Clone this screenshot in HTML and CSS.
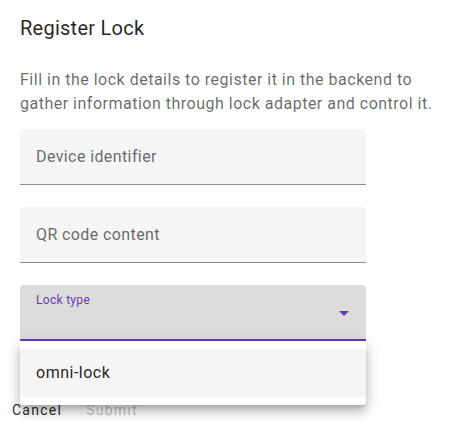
FILE: index.html
```html
<!DOCTYPE html>
<html lang="en">
<head>
<meta charset="utf-8">
<title>Register Lock</title>
<link rel="stylesheet" href="styles.css">
</head>
<body>
<div class="dialog">
  <h2 class="title">Register Lock</h2>
  <div class="content">
    <p class="desc">Fill in the lock details to register it in the backend to gather information through lock adapter and control it.</p>
    <div class="field"><span class="label">Device identifier</span></div>
    <div class="field"><span class="label">QR code content</span></div>
    <div class="select-wrap">
      <div class="field select">
        <span class="small-label">Lock type</span>
        <svg class="arrow" width="24" height="24" viewBox="0 0 24 24"><path d="M7 10l5 5 5-5z" fill="#673ab7"/></svg>
      </div>
      <div class="menu">
        <div class="menu-item">omni-lock</div>
      </div>
    </div>
  </div>
  <div class="actions">
    <button class="btn">Cancel</button>
    <button class="btn disabled">Submit</button>
  </div>
</div>
</body>
</html>
```
FILE: styles.css
```css
html, body {
  margin: 0;
  padding: 0;
  background: #fff;
  font-family: Roboto, "Liberation Sans", sans-serif;
}
.dialog {
  width: 472px;
}
.title {
  margin: 12px 20px 0;
  font-size: 20px;
  line-height: 32px;
  font-weight: 400;
  letter-spacing: 0.25px;
  color: rgba(0,0,0,0.87);
}
.content {
  padding: 0 20px;
}
.desc {
  margin: 24px 0 13px;
  font-size: 16px;
  line-height: 24px;
  letter-spacing: 0.5px;
  color: rgba(0,0,0,0.6);
}
.field {
  width: 346px;
  height: 55px;
  background: #f5f5f5;
  border-bottom: 1px solid rgba(0,0,0,0.42);
  border-radius: 4px 4px 0 0;
  margin-bottom: 22px;
  display: flex;
  align-items: center;
  position: relative;
  box-sizing: content-box;
}
.label {
  padding-left: 16px;
  font-size: 16px;
  color: rgba(0,0,0,0.6);
  letter-spacing: 0.4px;
}
.select-wrap {
  position: relative;
}
.select {
  height: 54px;
  background: #dcdcdc;
  border-bottom: 2px solid #673ab7;
  margin-bottom: 0;
  align-items: flex-start;
}
.small-label {
  margin: 8px 0 0 16px;
  font-size: 12px;
  line-height: 14px;
  color: #673ab7;
  letter-spacing: 0.3px;
}
.arrow {
  position: absolute;
  right: 10px;
  top: 16px;
}
.menu {
  position: absolute;
  top: 56px;
  left: 0;
  width: 346px;
  padding: 8px 0;
  background: #fff;
  border-radius: 4px;
  box-shadow: 0 5px 5px -3px rgba(0,0,0,0.2), 0 8px 10px 1px rgba(0,0,0,0.14), 0 3px 14px 2px rgba(0,0,0,0.12);
  z-index: 2;
}
.menu-item {
  height: 48px;
  line-height: 48px;
  padding-left: 16px;
  background: #f5f5f5;
  font-size: 16px;
  color: rgba(0,0,0,0.87);
  letter-spacing: 0.5px;
}
.actions {
  display: flex;
  gap: 8px;
  padding: 51px 0 0 4px;
}
.btn {
  background: none;
  border: none;
  padding: 0 8px;
  height: 36px;
  font-family: Roboto, "Liberation Sans", sans-serif;
  font-size: 14px;
  letter-spacing: 1.25px;
  color: rgba(0,0,0,0.87);
  cursor: pointer;
}
.btn.disabled {
  color: rgba(0,0,0,0.26);
}
```
